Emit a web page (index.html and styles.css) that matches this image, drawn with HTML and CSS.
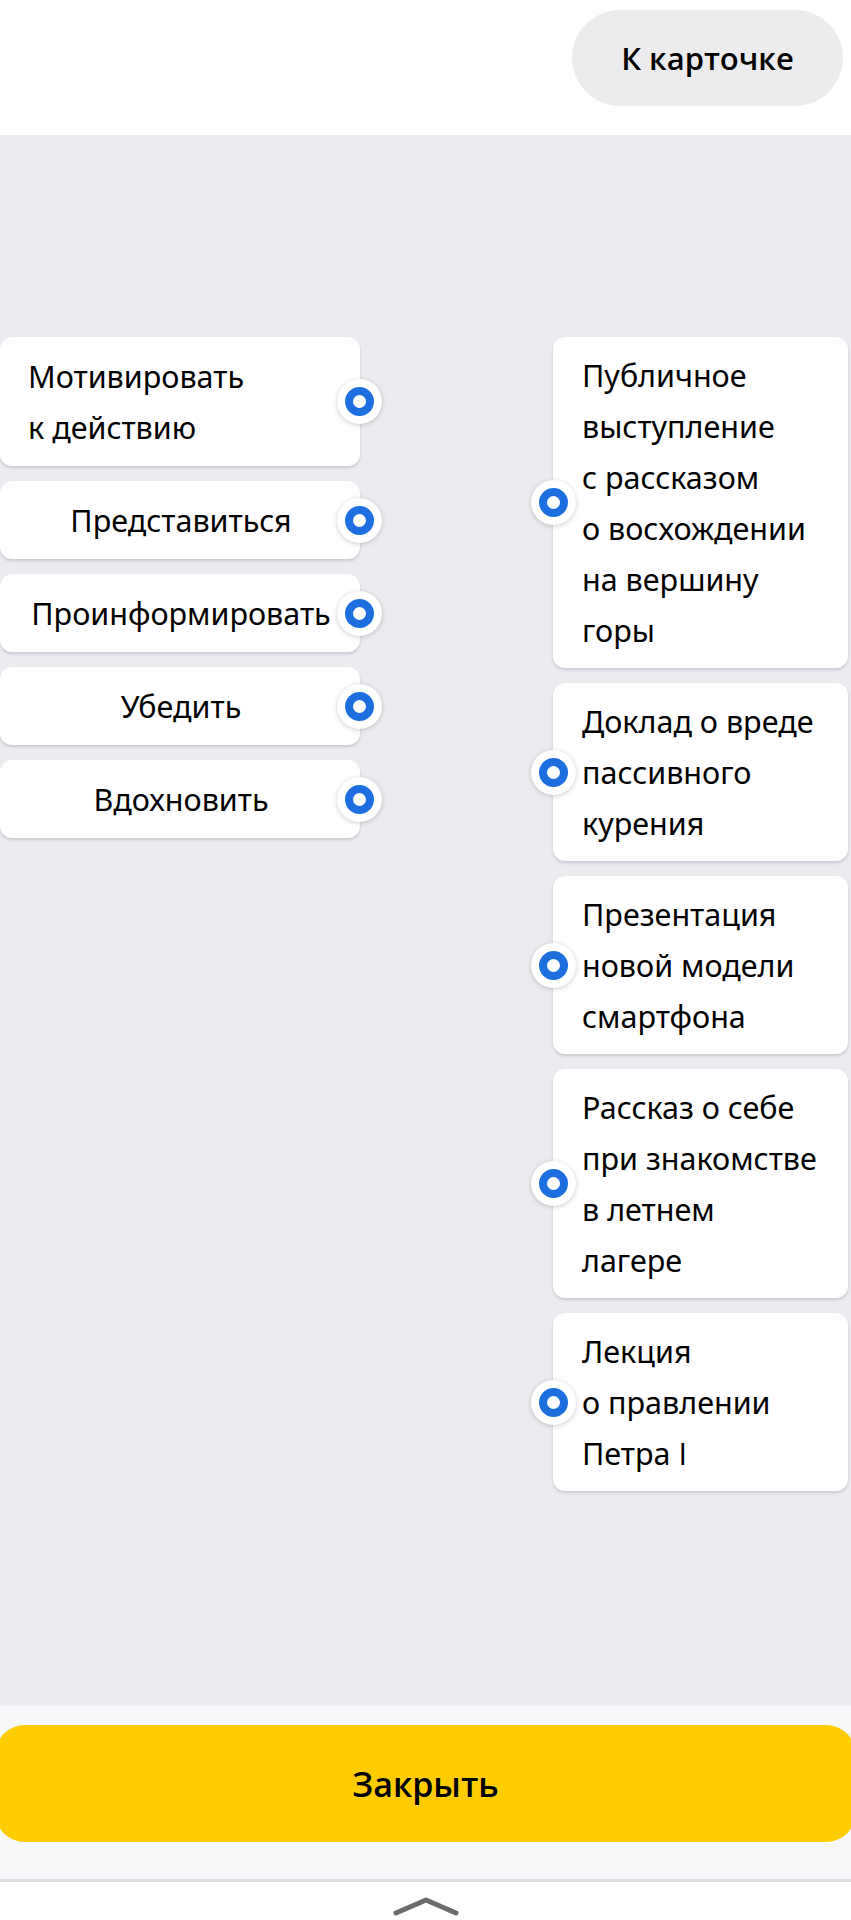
FILE: index.html
```html
<!DOCTYPE html>
<html lang="ru">
<head>
<meta charset="utf-8">
<link rel="stylesheet" href="styles.css">
</head>
<body>
<header class="topbar">
  <button class="to-card">К карточке</button>
</header>
<main class="board">
  <div class="col col-left">
    <div class="card"><span>Мотивировать к&nbsp;действию</span><i class="dot dot-right"></i></div>
    <div class="card"><span>Представиться</span><i class="dot dot-right"></i></div>
    <div class="card"><span>Проинформировать</span><i class="dot dot-right"></i></div>
    <div class="card"><span>Убедить</span><i class="dot dot-right"></i></div>
    <div class="card"><span>Вдохновить</span><i class="dot dot-right"></i></div>
  </div>
  <div class="col col-right">
    <div class="card card-r"><span>Публичное<br>выступление<br>с рассказом<br>о восхождении<br>на вершину<br>горы</span><i class="dot dot-left"></i></div>
    <div class="card card-r"><span>Доклад о вреде<br>пассивного<br>курения</span><i class="dot dot-left"></i></div>
    <div class="card card-r"><span>Презентация<br>новой модели<br>смартфона</span><i class="dot dot-left"></i></div>
    <div class="card card-r"><span>Рассказ о себе<br>при знакомстве<br>в летнем<br>лагере</span><i class="dot dot-left"></i></div>
    <div class="card card-r"><span>Лекция<br>о правлении<br>Петра <b class="roman">I</b></span><i class="dot dot-left"></i></div>
  </div>
</main>
<footer class="footer">
  <button class="close">Закрыть</button>
</footer>
<nav class="navbar">
  <svg class="chevron" width="66" height="20" viewBox="0 0 66 20"><path d="M3 17 L33 4 L63 17" fill="none" stroke="#6b6b6b" stroke-width="5" stroke-linecap="round" stroke-linejoin="round"/></svg>
</nav>
</body>
</html>
```
FILE: styles.css
```css
* { box-sizing: border-box; }
html, body { margin: 0; padding: 0; }
body {
  width: 851px;
  height: 1920px;
  overflow: hidden;
  background: #fff;
  font-family: "Noto Sans", "Open Sans", sans-serif;
  color: #000;
}
.topbar {
  height: 135px;
  display: flex;
  justify-content: flex-end;
  align-items: flex-start;
  padding: 10px 8px 0 0;
  background: #fff;
}
.to-card {
  width: 271px;
  height: 96px;
  border: none;
  border-radius: 48px;
  background: #ececef;
  font-family: "Open Sans", "Noto Sans", sans-serif;
  font-size: 31px;
  font-weight: 600;
  color: #000;
  padding: 0;
}
.board {
  height: 1571px;
  background: #ebebf0;
  display: flex;
  justify-content: space-between;
  align-items: flex-start;
  padding: 202px 3px 0 0;
}
.col {
  display: flex;
  flex-direction: column;
  gap: 15px;
}
.col-left { width: 360px; }
.col-right { width: 295px; }
.card {
  position: relative;
  background: #fff;
  border-radius: 12px;
  box-shadow: 0 2px 3px rgba(40, 40, 60, 0.18);
  font-size: 30.5px;
  line-height: 51px;
  padding: 13.5px 26px 13.5px 28px;
  display: flex;
  justify-content: center;
}
.card-r {
  justify-content: flex-start;
  padding: 12.5px 12px 12.5px 29px;
}
.roman {
  font-family: "Open Sans", "Liberation Sans", sans-serif;
  font-weight: 400;
}
.dot {
  position: absolute;
  top: 50%;
  width: 45px;
  height: 45px;
  margin-top: -22.5px;
  border-radius: 50%;
  background: #fff;
  box-shadow: 0 1px 5px rgba(0, 0, 0, 0.2);
}
.dot::after {
  content: "";
  position: absolute;
  left: 8px;
  top: 8px;
  width: 29px;
  height: 29px;
  border-radius: 50%;
  box-sizing: border-box;
  border: 8px solid #1d6fe0;
  background: #fff;
}
.dot-right { right: -22px; }
.dot-left { left: -22px; }
.footer {
  height: 176px;
  background: #f7f8fa;
  padding-top: 19px;
  border-bottom: 3px solid #dcdce0;
}
.close {
  display: block;
  width: 861px;
  margin-left: -5px;
  height: 117px;
  border: none;
  border-radius: 30px;
  background: #ffcc00;
  font-family: "Open Sans", "Noto Sans", sans-serif;
  font-size: 34px;
  font-weight: 600;
  color: #000;
  padding: 0;
}
.navbar {
  height: 38px;
  background: #fff;
  display: flex;
  justify-content: center;
  align-items: flex-start;
  padding-top: 14px;
}
.chevron { display: block; }
```
